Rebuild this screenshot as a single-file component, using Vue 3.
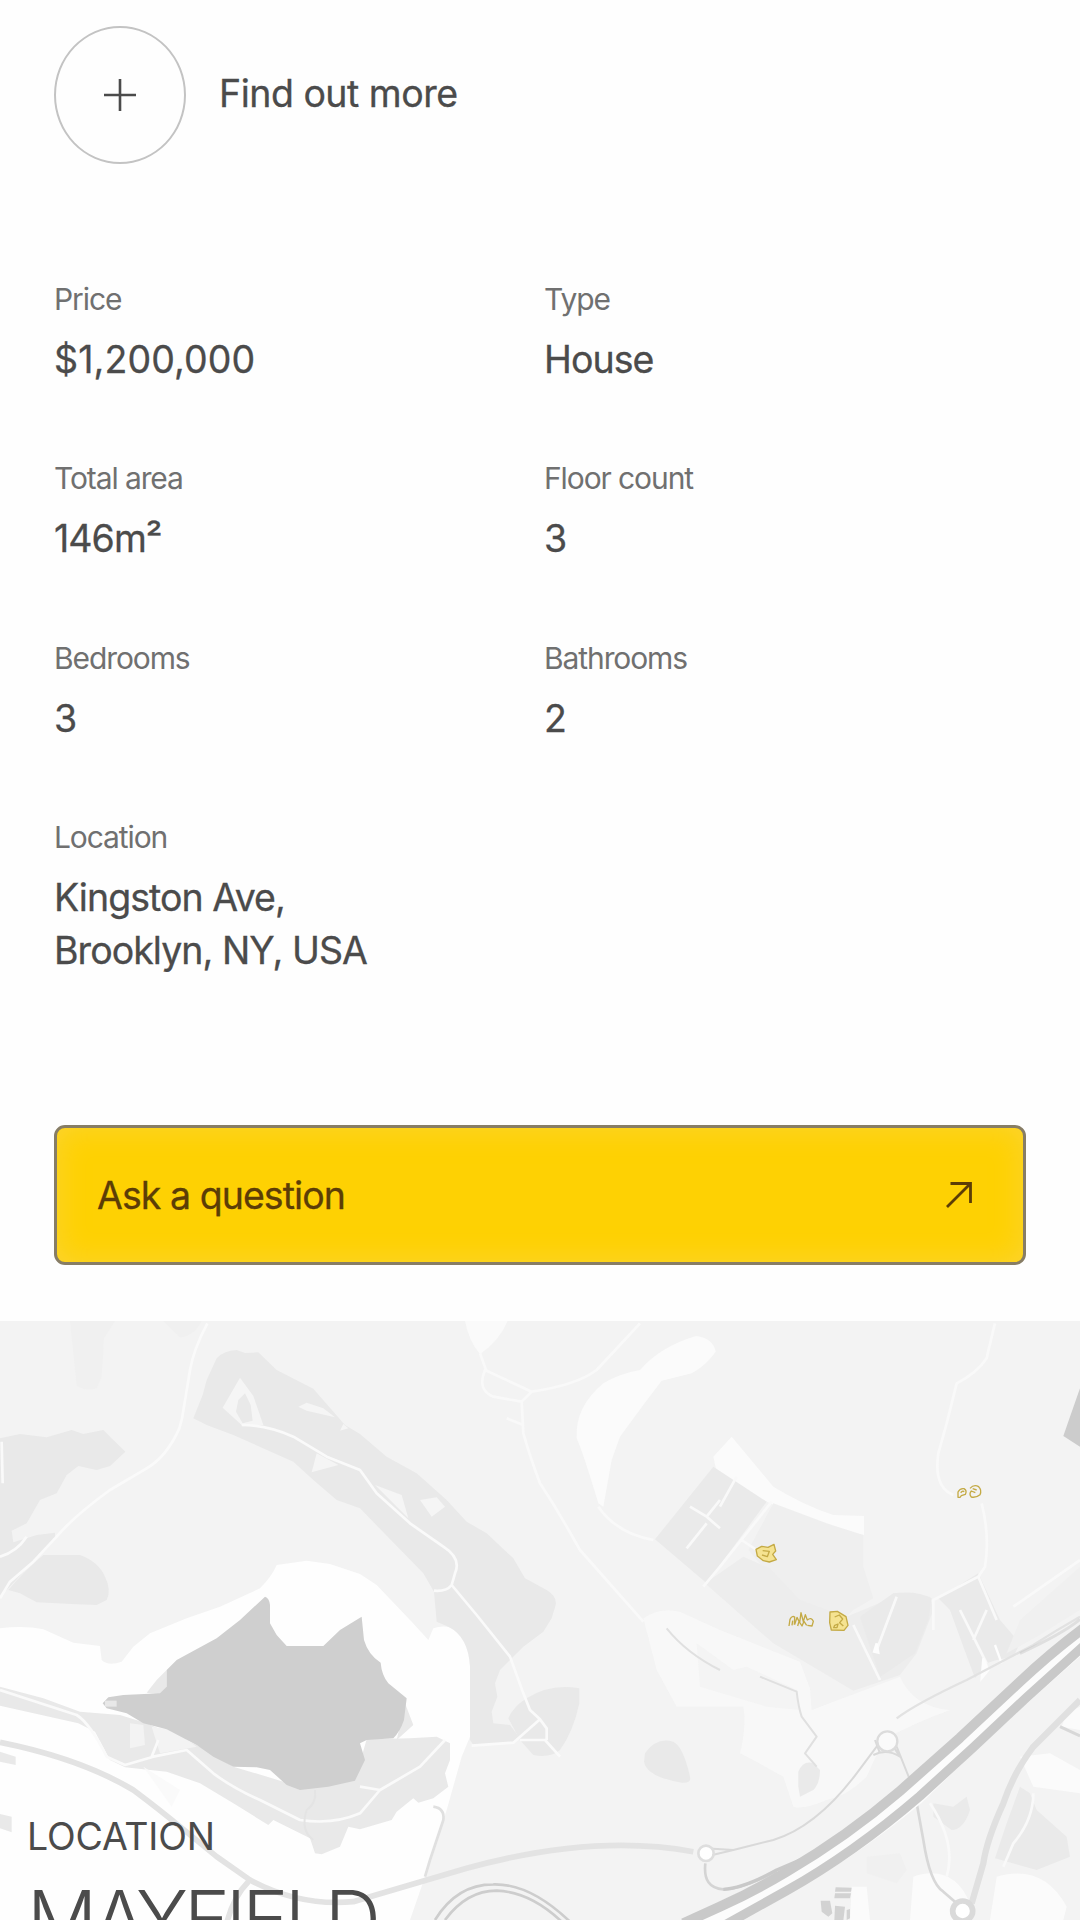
<script setup>
const facts = [
  { label: 'Price', value: ['$1,200,000'], numeric: true },
  { label: 'Type', value: ['House'] },
  { label: 'Total area', value: ['146m²'] },
  { label: 'Floor count', value: ['3'] },
  { label: 'Bedrooms', value: ['3'] },
  { label: 'Bathrooms', value: ['2'] },
  { label: 'Location', value: ['Kingston Ave,', 'Brooklyn, NY, USA'] },
]
</script>

<template>
  <main class="page">
    <section class="details">
      <a class="more">
        <span class="ring">
          <svg width="34" height="34" viewBox="0 0 34 34"><path d="M17 1v32M1 17h32" /></svg>
        </span>
        <span class="more-text">Find out more</span>
      </a>

      <dl class="facts">
        <div v-for="fact in facts" :key="fact.label" class="fact">
          <dt>{{ fact.label }}</dt>
          <dd :class="{ numeric: fact.numeric }">
            <span v-for="line in fact.value" :key="line" class="line">{{ line }}</span>
          </dd>
        </div>
      </dl>

      <button class="ask">
        <span>Ask a question</span>
        <svg width="28" height="28" viewBox="0 0 28 28"><path d="M2 26 25 3M5.500 2.500H25.500V22" /></svg>
      </button>
    </section>

    <section class="location">
      <svg class="map" viewBox="0 33 3240 1797" preserveAspectRatio="none">
        <rect y="33" width="3240" height="1797" fill="#f3f3f3" />

        <!-- open ground around the lake -->
        <path fill="#fefefe" d="M0 955Q70 945 130 958L220 998 300 1008 305 1050Q325 1070 365 1055L400 1010 450 970 560 925 660 890 780 835Q815 800 830 765L920 752 990 762 1080 792 1130 825 1235 935 1285 990 1300 955Q1340 940 1375 965 1410 1000 1410 1070V1280L1385 1340 1340 1500 1275 1700 1230 1830H0Z" />

        <!-- woodland -->
        <g fill="#e9e9e9">
          <path d="M0 385 60 372 140 382 215 360 250 372 310 360 340 390 376 425 330 468 290 480 235 468 200 495 170 550 120 570 80 640 35 662 40 697 110 675 165 668 165 690 110 745 20 840 0 855Z" />
          <path d="M25 840Q75 780 130 735H240Q295 755 315 800 335 840 320 870L290 885 230 883 110 877 60 850Z" />
          <path d="M580 325 608 255 620 210 650 145Q670 122 710 120L735 129 775 127 830 180 940 236 1035 345 1080 372 1160 440 1250 490 1340 570 1400 635 1460 670 1540 745 1575 805 1640 840Q1672 860 1667 885L1655 925 1630 965 1570 1010 1530 1050 1500 1080 1485 1120 1492 1160 1475 1205 1480 1240 1530 1245 1560 1285 1530 1300 1420 1305 1410 1290V1070Q1405 980 1345 950L1310 935 1302 845 1270 790 1080 595 1010 570 940 510 880 455 700 375 620 345Z" />
          <path d="M1580 1165Q1650 1120 1738 1135V1180Q1720 1265 1680 1320 1650 1345 1600 1335L1560 1290 1525 1225Q1540 1190 1580 1165Z" />
          <path d="M1935 1330Q1970 1280 2020 1295 2050 1310 2070 1400 2075 1420 2045 1418 1940 1400 1932 1355Z" />
          <path fill="#f0f0f0" d="M210 33H345L312 85 305 200 290 235Q260 245 230 228ZM490 33H605Q580 80 540 82Z" />
          <path d="M0 1130 130 1165 240 1205 360 1215 440 1240 590 1305 700 1370 900 1430 1065 1410 1100 1288 1230 1285 1310 1280 1350 1300 1350 1350 1335 1390 1345 1430 1300 1465 1255 1478 1240 1465 1190 1505 1175 1530 1080 1558 1045 1550 1020 1610 965 1633 945 1630 930 1585 820 1530 805 1545 700 1480 600 1420 500 1385 430 1378 375 1372 330 1350 285 1265 235 1240 0 1187Z" />
          <path d="M440 1148 470 1110 500 1080V1155ZM1215 1180 1240 1245 1190 1290Z" />
          <path d="M0 1325 47 1340V1365L0 1355ZM0 1512 35 1520V1567L0 1555Z" />
        </g>
        <path fill="#f5f5f5" d="M720 203 760 258 790 345 725 345 668 293ZM895 290 920 278 970 295 1005 322 920 302ZM950 430 1015 465 935 487ZM1030 342 1045 355 1020 362ZM1125 525 1205 555 1225 625ZM1260 570 1310 562 1335 590 1295 620Z" />
        <path fill="#e9e9e9" d="M735 250 752 285 758 332 728 340 708 305 715 270Z" />
        <path fill="#f3f3f3" d="M390 1240 430 1245 435 1305 390 1315ZM455 1250 520 1260 590 1310 480 1330Z" />
        <path fill="#fafafa" d="M430 1370 540 1440 515 1490Z" />

        <!-- lake -->
        <path fill="#cfcfcf" d="M795 860Q808 864 810 885V940L830 975 860 1008H970L1020 960 1085 920 1092 990Q1105 1035 1142 1058 1145 1095 1165 1120L1220 1165 1212 1230Q1200 1265 1180 1285L1100 1290 1080 1300 1095 1350 1065 1412 985 1430 900 1440 860 1425 810 1380 770 1372 700 1370 640 1340 590 1305 500 1258 430 1240 380 1210 320 1195 308 1180 325 1162 370 1155 480 1150 500 1130V1080L530 1050 650 985 720 930Z" />
        <path fill="#e8e8e8" d="M315 1172H350V1190H315Z" />

        <!-- pale clearings -->
        <g fill="#fbfbfb">
          <path d="M1395 33H1523Q1500 90 1440 133 1405 90 1395 33Z" opacity=".8" />
          <path d="M2088 78Q2140 85 2147 125 2120 165 2075 190L1985 212 1930 285 1860 380 1835 450 1810 590 1795 580Q1750 430 1730 385 1725 290 1810 220 1860 190 1920 180 1980 110 2088 78Z" />
          <path d="M2140 440 2195 380 2320 530Q2410 585 2500 615L2592 618V675L2540 667 2420 628 2310 580 2240 545 2150 485Z" />
          <path d="M1930 925Q1980 890 2040 905L2160 960 2400 1055 2430 1135 2435 1200 2580 1145 2700 1100Q2740 1190 2850 1200 2740 1240 2650 1290L2600 1400Q2540 1460 2480 1470 2410 1500 2380 1490L2350 1400Q2260 1350 2220 1330 2240 1250 2230 1190L2030 1190 1970 1080Z" opacity=".65" />
          <path d="M2740 1700Q2860 1660 2910 1780V1830H2730ZM3060 1340 3150 1330 3240 1380V1450L3100 1430Z" />
          <path d="M2990 1700Q3130 1660 3200 1790L3190 1830H2970ZM3200 1210 3240 1190V1260L3185 1250ZM2555 1730 2600 1730 2610 1830H2550Z" />
        </g>
        <path fill="#f3f3f3" d="M2090 1000 2200 1080 2240 1070 2390 1140 2400 1200 2300 1190 2100 1130Z" opacity=".8" />

        <!-- fields -->
        <g fill="#eaeaea">
          <path d="M2140 470 2300 575 2120 820 1965 688Z" />
          <path fill="#efefef" d="M2320 580 2480 640 2590 675 2590 770 2620 865 2560 900 2530 930 2370 870 2245 720Z" />
          <path fill="#ededed" d="M2230 740 2310 775 2400 870 2540 920 2660 870 2680 850 2790 860 2800 900 2750 1030 2700 1095 2560 1142 2320 1000 2115 820Z" />
          <path d="M2680 850Q2750 840 2795 865L2785 930 2745 1030 2640 1100 2580 920Z" />
          <path d="M2815 865 2935 790 3000 930 3060 1000 3040 1040 2990 1050 2960 1060 2925 1105 2890 1010 2850 900Z" />
          <path d="M2395 1385Q2410 1350 2440 1360L2460 1380Q2460 1420 2440 1440L2400 1460 2395 1430Z" />
          <path d="M2800 1480 2860 1490 2900 1460 2910 1500Q2890 1560 2855 1560L2800 1520Z" />
          <path d="M3060 1430 3090 1450 3110 1500 3200 1580 3210 1640 3110 1680 2985 1645 3020 1540Z" />
          <path fill="#f0f0f0" d="M2600 1640 2700 1630 2720 1680 2690 1720 2600 1690ZM3060 930 3240 770V900L3110 980 3020 1030Z" />
        </g>
        <path fill="#cccccc" d="M3240 235 3210 320 3190 378 3240 410Z" />

        <!-- footpaths -->
        <g class="paths">
          <path d="M622 40Q580 120 570 180L552 290Q548 325 538 355 500 440 440 475L330 540Q220 620 170 680L100 755 30 815 0 865M5 395 8 520M0 740Q50 725 80 680" />
          <path d="M725 345Q800 345 880 380L980 440 1080 480 1130 550 1230 640 1330 710Q1385 745 1365 790L1355 825 1430 915 1530 1040 1570 1150 1590 1200 1620 1228 1640 1255 1640 1290M1355 825Q1340 845 1302 842M1415 1307 1540 1298 1620 1228M1560 1290H1635L1680 1340" />
          <path d="M0 1140 230 1215Q270 1240 320 1340L375 1365 460 1340 560 1320 640 1390Q700 1435 780 1470L900 1530Q1000 1545 1080 1510L1140 1440 1260 1370 1335 1290M1080 1430 1140 1440M455 1340 475 1290" />
          <path class="faint" d="M1920 40 1790 180Q1730 225 1595 245L1455 180Q1430 240 1480 260L1565 275 1570 370Q1590 440 1620 520 1660 580 1700 650L1740 720 1930 935M1565 275 1595 245M1520 325 1570 345M1440 130 1460 185" />
          <path class="faint" d="M1795 590Q1850 670 1960 690M2070 590 2120 620 2160 570M2120 620 2160 655M2120 640 2060 715M2315 575 2160 770 2110 830M2225 690 2270 720M2210 500 2160 590" />
          <path class="faint" d="M2985 40Q2970 100 2960 145 2930 190 2870 220L2840 340 2815 430Q2800 530 2860 555M2945 580Q2970 680 2955 770L2935 800 2800 870 2800 960M2935 800 2990 930M3040 890 3240 750" />
          <path class="faint" d="M2560 945 2640 1110M2690 860 2630 1020M2880 900 2960 1060M2960 900 2920 990M3100 1450Q3100 1530 3040 1600L3010 1670M2790 1480Q2870 1600 2840 1700" />
        </g>
        <path fill="#fdfdfd" d="M2950 1045 2965 1080 2945 1105ZM2985 1005 3005 1060ZM2630 1000 2635 1028 2622 1025Z" stroke="#fdfdfd" stroke-width="7" />

        <!-- minor roads -->
        <g class="roads">
          <path stroke="#e3e3e3" stroke-width="17" d="M0 1297Q240 1345 400 1440 480 1500 540 1550L650 1640 750 1710Q900 1790 1060 1775L1120 1757 1400 1675Q1780 1570 2080 1625M745 1715Q700 1760 680 1840" />
          <path stroke="#e0e0e0" stroke-width="8" d="M1300 1490Q1335 1495 1330 1530L1290 1650 1275 1700" />
          <path stroke="#e4e4e4" stroke-width="6" d="M945 1440Q950 1480 920 1500 900 1560 940 1590" />
          <path stroke="#e0e0e0" stroke-width="6" d="M2000 955Q2060 1030 2160 1080M2280 1100 2390 1145Q2395 1190 2405 1220L2450 1280 2415 1330 2450 1370" />
          <path stroke="#d9d9d9" stroke-width="6" d="M2115 1615 2200 1620 2320 1590Q2450 1550 2570 1390L2630 1310 2640 1280M2690 1310 2730 1410M2620 1335Q2660 1315 2700 1340L2680 1310M2640 1330 2625 1290M2115 1640 2200 1620" />
          <circle cx="2662" cy="1294" r="30" fill="#fafafa" stroke="#dcdcdc" stroke-width="7" />
          <path stroke="#e2e2e2" stroke-width="7" d="M2690 1225Q2750 1180 2900 1110L3100 1005Q3170 960 3240 920" />
          <path stroke="#d8d8d8" stroke-width="8" d="M2750 1480 2770 1590Q2790 1720 2830 1745L2870 1780" />
          <path stroke="#e0e0e0" stroke-width="19" d="M3240 1170 3100 1310Q3040 1390 3010 1480 2960 1590 2950 1660L2915 1780" />
          <path stroke="#d8d8d8" stroke-width="9" d="M3180 1250 3240 1278" />
          <circle cx="2888" cy="1803" r="30" fill="#fff" stroke="#dadada" stroke-width="17" />
          <path stroke="#d4d4d4" stroke-width="8" d="M2116 1660Q2108 1735 2170 1738 2215 1740 2330 1685" />
          <circle cx="2118" cy="1630" r="23" fill="#fff" stroke="#dedede" stroke-width="8" />
          <path stroke="#cdcdcd" stroke-width="8" d="M1305 1830Q1370 1723 1480 1723 1590 1720 1710 1835M1335 1830Q1400 1742 1490 1742 1590 1745 1685 1835" />
          <path stroke="#b9b9b9" stroke-width="9" d="M3240 928Q3190 970 3060 1030" opacity=".35" />
        </g>

        <!-- motorway -->
        <g class="roads">
          <path stroke="#fcfcfc" stroke-width="68" d="M2110 1835Q2230 1780 2350 1720 2540 1620 2740 1455L2900 1300 3080 1135 3250 985" />
          <path stroke="#c9c9c9" stroke-width="30" d="M2050 1840 2160 1790Q2260 1745 2360 1685 2540 1580 2700 1443L2880 1283 3060 1115Q3150 1030 3250 955" />
          <path stroke="#c9c9c9" stroke-width="28" d="M2180 1842 2360 1742Q2560 1630 2760 1458L2920 1312 3080 1162 3250 1009" />
          <path stroke="#c9c9c9" stroke-width="10" d="M2170 1738Q2230 1735 2330 1680L2400 1650" />
        </g>
        <path fill="#d2d2d2" d="M2507 1732 2555 1733 2553 1745H2505ZM2505 1750H2553L2550 1765H2503ZM2462 1772H2490L2497 1810 2485 1820 2465 1805ZM2505 1787 2535 1790 2530 1832H2503ZM2540 1800 2550 1797V1825L2540 1830Z" />

        <!-- places -->
        <g class="places">
          <path d="M2874 562V546Q2880 534 2892 536 2902 542 2896 553L2884 557 2880 562ZM2882 548Q2890 540 2892 546M2910 535Q2922 522 2936 530 2946 540 2940 554 2928 564 2914 561 2906 552 2914 543L2926 548M2918 536 2930 540" />
          <path class="filled" d="M2268 718 2285 709 2304 712 2322 703 2327 723 2318 733 2329 749 2308 756 2290 752 2272 738ZM2288 722 2308 724 2302 740 2286 735" />
          <path d="M2367 948 2370 928Q2376 916 2384 921L2383 944M2384 944 2391 922 2399 938 2403 908 2410 935 2416 914 2422 930Q2434 920 2440 934L2436 948 2422 946M2376 946 2378 932M2393 948 2397 934 2406 948 2412 934 2420 946" />
          <path class="filled" d="M2490 906 2512 904 2538 920 2544 946 2532 961 2494 960 2489 938ZM2504 921 2518 915 2528 927 2519 938 2530 948M2504 946 2514 942 2511 953 2501 953Z" />
        </g>
      </svg>

      <div class="caption">
        <p>LOCATION</p>
        <h2>MAYFIELD</h2>
      </div>
    </section>
  </main>
</template>

<style>
body {
  margin: 0;
  background: #fefefe;
}
</style>

<style scoped>
.page {
  width: 1080px;
  height: 1920px;
  overflow: hidden;
  display: flex;
  flex-direction: column;
  color: #4b4b4b;
  background: #fefefe;
  font-family: Inter, "Liberation Sans", sans-serif;
}

.details {
  height: 1321px;
  flex: none;
  box-sizing: border-box;
  padding: 26px 54px 0;
}

.more {
  display: flex;
  align-items: center;
  gap: 33px;
}

.ring {
  width: 132px;
  height: 138px;
  box-sizing: border-box;
  display: flex;
  align-items: center;
  justify-content: center;
  border: 2px solid #c3c3c3;
  border-radius: 50%;
}

.ring svg path {
  fill: none;
  stroke: #4b4b4b;
  stroke-width: 2.6;
}

.more-text,
dd,
.ask span {
  font-size: 37.5px;
  font-weight: 400;
  line-height: 53px;
  letter-spacing: -0.95px;
  -webkit-text-stroke: 0.3px currentColor;
}

.more-text {
  padding-bottom: 3px;
  letter-spacing: -0.5px;
}

.facts {
  margin: 105px 0 0;
  display: grid;
  grid-template-columns: 490px 1fr;
  row-gap: 62.4px;
}

.fact {
  display: flex;
  flex-direction: column;
  gap: 4px;
}

dt {
  font-size: 30px;
  line-height: 60px;
  letter-spacing: -1.1px;
  color: #707070;
}

dd {
  margin: 0;
}

dd.numeric {
  letter-spacing: 0.1px;
}

.line {
  display: block;
}

.ask {
  width: 972px;
  height: 140px;
  margin-top: 148px;
  padding: 0 50px 0 40px;
  display: flex;
  align-items: center;
  justify-content: space-between;
  border: 3px solid #877d65;
  border-radius: 11px;
  background: #fed103;
  box-shadow: inset 0 0 30px #fbd433;
  color: #5c3d06;
  font-family: inherit;
}

.ask svg path {
  fill: none;
  stroke: #5c3d06;
  stroke-width: 2.8;
}

.location {
  position: relative;
  height: 599px;
  flex: none;
  overflow: hidden;
}

.map {
  display: block;
  width: 1080px;
  height: 599px;
}

.paths path {
  fill: none;
  stroke: #fafafa;
  stroke-width: 8;
  stroke-linejoin: round;
}

.paths path.faint {
  stroke: #f9f9f9;
}

.roads path {
  fill: none;
  stroke-linejoin: round;
}

.places path {
  fill: none;
  stroke: #c4aa45;
  stroke-width: 4;
  stroke-linejoin: round;
}

.places path.filled {
  fill: #f5e391;
}

.caption {
  position: absolute;
  left: 27px;
  top: 490px;
}

.caption p {
  margin: 0;
  font-size: 37.5px;
  line-height: 52px;
  letter-spacing: -0.2px;
}

.caption h2 {
  margin: 11px 0 0;
  font-size: 78px;
  font-weight: 300;
  line-height: 90px;
  letter-spacing: -4px;
  white-space: nowrap;
}
</style>
